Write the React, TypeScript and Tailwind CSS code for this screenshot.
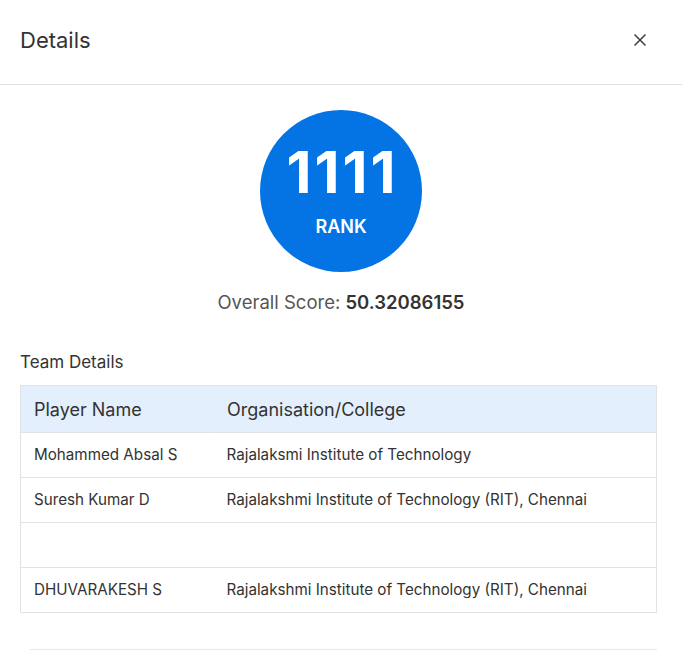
import { X } from "lucide-react";

const players = [
  { name: "Mohammed Absal S", org: "Rajalaksmi Institute of Technology" },
  { name: "Suresh Kumar D", org: "Rajalakshmi Institute of Technology (RIT), Chennai" },
  { name: "", org: "" },
  { name: "DHUVARAKESH S", org: "Rajalakshmi Institute of Technology (RIT), Chennai" },
];

export default function App() {
  return (
    <div className="w-[682px] h-[650px] overflow-hidden bg-white text-[#333] font-['Inter',sans-serif]">
      <div className="h-[85px] flex items-center justify-between pl-5 pr-[32px] border-b border-[#e3e3e3]">
        <h2 className="text-[22px] text-[#333] -mt-1">Details</h2>
        <X className="w-[20px] h-[20px] text-[#444] -mt-1" strokeWidth={2} />
      </div>

      <div className="flex flex-col items-center pt-[25px]">
        <div className="w-[162px] h-[162px] rounded-full bg-[#0474e5] flex flex-col items-center justify-center text-white">
          <div className="text-[58px] font-bold leading-none tracking-[3px] pl-[3px] mt-[-4px]">1111</div>
          <div className="text-[18px] font-semibold leading-none mt-[17px]">RANK</div>
        </div>
        <p className="mt-[17px] text-[18.5px] text-[#555]">
          Overall Score: <span className="font-semibold text-[#333]">50.32086155</span>
        </p>
      </div>

      <div className="pl-5 pr-[25px] mt-[33px]">
        <h3 className="text-[17px] text-[#333]">Team Details</h3>
        <table className="mt-[10px] w-full border-collapse border border-[#e2e2e2] text-left">
          <thead>
            <tr className="bg-[#e3effc] h-[47px]">
              <th className="font-normal text-[18px] pl-[13px] w-[193px] border-r border-[#e8eef6]">Player Name</th>
              <th className="font-normal text-[18px] pl-[13px]">Organisation/College</th>
            </tr>
          </thead>
          <tbody>
            {players.map((p, i) => (
              <tr key={i} className="h-[45px] border-t border-[#e2e2e2]">
                <td className="text-[15.2px] pl-[13px]">{p.name}</td>
                <td className="text-[15.2px] pl-[13px]">{p.org}</td>
              </tr>
            ))}
          </tbody>
        </table>
        <div className="mt-[36px] ml-[10px] border-t border-[#e8e8e8]" />
      </div>
    </div>
  );
}
